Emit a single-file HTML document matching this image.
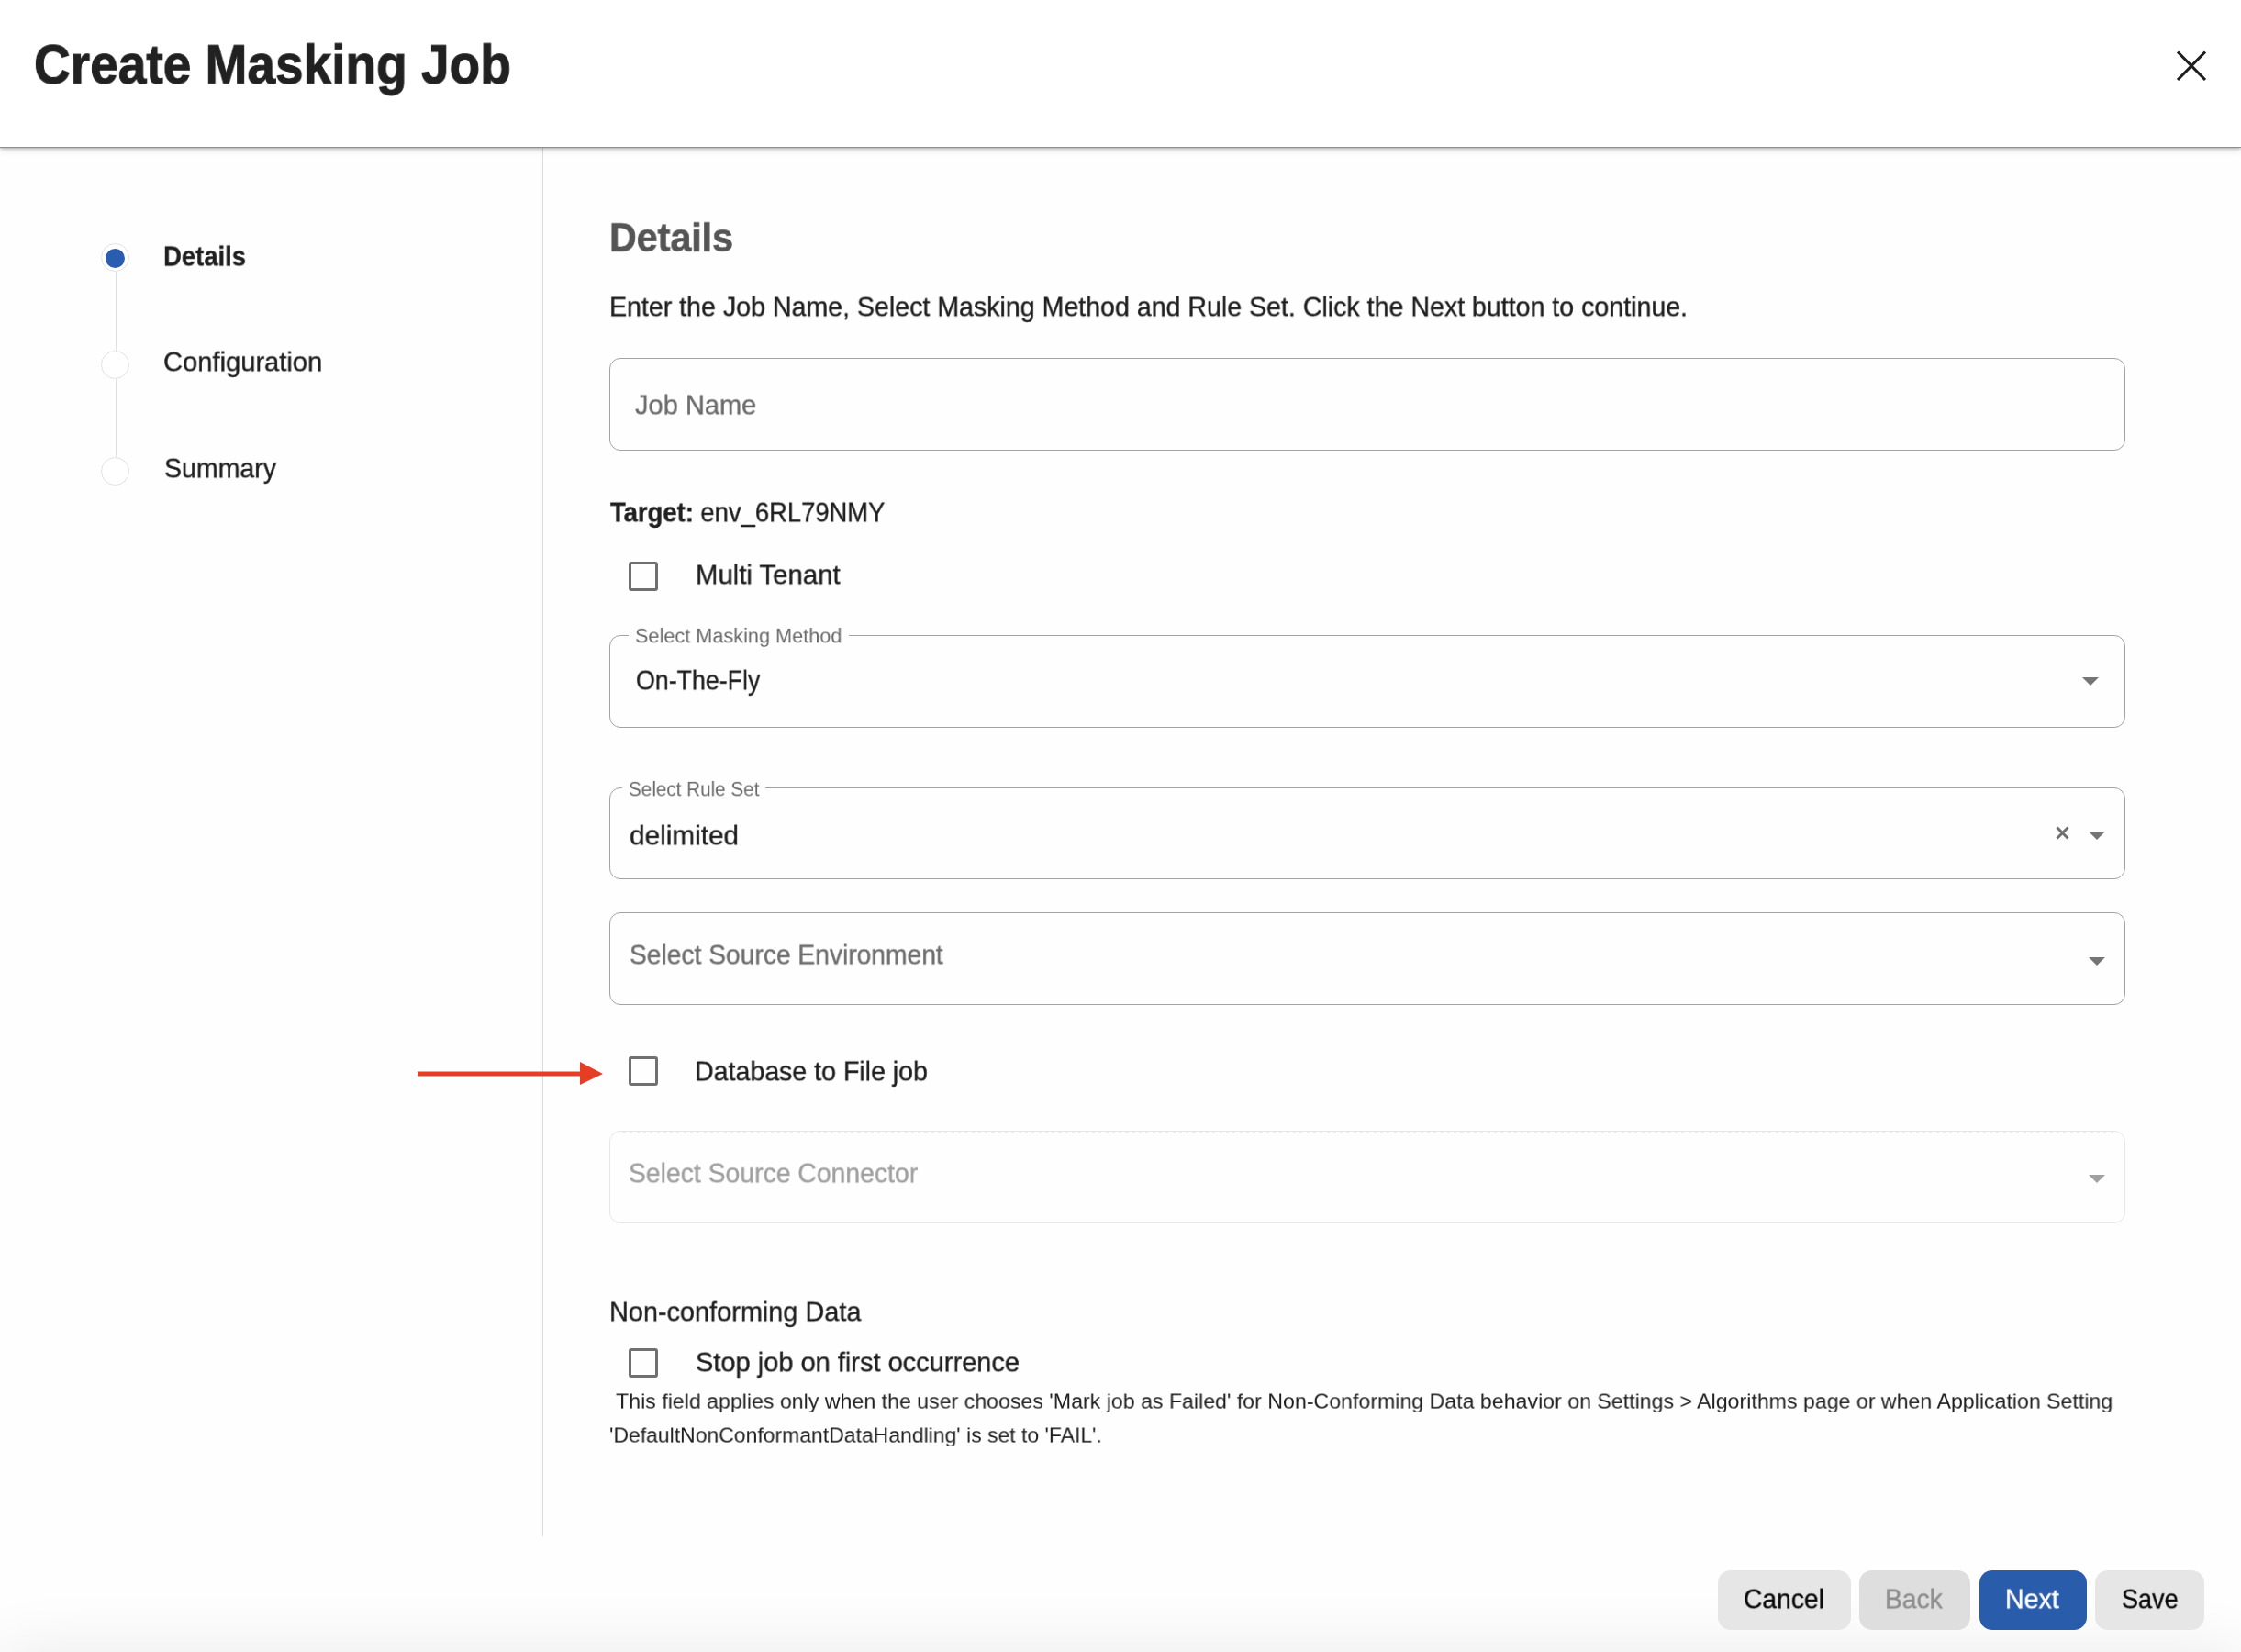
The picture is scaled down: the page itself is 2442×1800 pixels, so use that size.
<!DOCTYPE html>
<html><head><meta charset="utf-8">
<style>
html,body{margin:0;padding:0;}
body{width:2442px;height:1800px;position:relative;overflow:hidden;background:#fefefe;font-family:"Liberation Sans",sans-serif;}
.t{position:absolute;white-space:pre;line-height:0;transform-origin:0 0;z-index:3;will-change:transform;}
.t b{font-weight:700;}
.abs{position:absolute;}
#hdr{left:0;top:0;width:2442px;height:160px;background:#ffffff;box-shadow:0 2px 3px rgba(0,0,0,0.28),0 3px 8px rgba(0,0,0,0.12);z-index:1;}
#hline{left:0;top:160px;width:2442px;height:1px;background:#8f8f8f;z-index:2;}
#divider{left:591px;top:161px;width:1px;height:1513px;background:#dcdcdc;}
.circ{width:29px;height:29px;border:1px solid #e2e2e2;border-radius:50%;background:#fff;}
.dot{width:21px;height:21px;border-radius:50%;background:#2a5db0;}
.vline{width:1px;background:#e0e0e0;}
.box{border:1.4px solid #a3a3a3;border-radius:12px;background:transparent;box-sizing:border-box;}
.cb{width:32px;height:32px;border:3px solid #707070;border-radius:3px;box-sizing:border-box;}
.btn{height:65px;border-radius:14px;top:1711px;}
#foot{left:0;top:1806px;width:2442px;height:200px;background:#f0f0f0;box-shadow:0 0 70px 10px rgba(0,0,0,0.075);border-radius:30px;}
</style></head><body>
<div id="hdr" class="abs"></div><div id="hline" class="abs"></div>
<svg class="abs" style="left:0;top:0;z-index:2" width="2442" height="160">
 <path d="M2373 56.5 L2403 87 M2403 56.5 L2373 87" stroke="#1f1f1f" stroke-width="3.2" fill="none"/>
</svg>
<div id="divider" class="abs"></div>
<!-- stepper -->
<div class="abs vline" style="left:125.5px;top:296px;height:86px;"></div>
<div class="abs vline" style="left:125.5px;top:413px;height:85px;"></div>
<div class="abs circ" style="left:110px;top:265px;"></div>
<div class="abs dot" style="left:115px;top:270.5px;"></div>
<div class="abs circ" style="left:110px;top:382px;"></div>
<div class="abs circ" style="left:110px;top:498px;"></div>
<!-- inputs -->
<div class="abs box" style="left:664px;top:390px;width:1652px;height:101px;"></div>
<div class="abs cb" style="left:684.5px;top:611.5px;"></div>
<div class="abs box" style="left:664px;top:692px;width:1652px;height:101px;"></div>
<div class="abs" style="left:685px;top:689px;width:240px;height:6px;background:#fefefe;"></div>
<svg class="abs" style="left:2269px;top:738px" width="18" height="9"><path d="M0 0 L18 0 L9 9 Z" fill="#757575"/></svg>
<div class="abs box" style="left:664px;top:858px;width:1652px;height:100px;"></div>
<div class="abs" style="left:678px;top:855px;width:156px;height:6px;background:#fefefe;"></div>
<svg class="abs" style="left:2240px;top:900px" width="15" height="15"><path d="M1.5 1.5 L13.5 13.5 M13.5 1.5 L1.5 13.5" stroke="#707070" stroke-width="3" fill="none"/></svg>
<svg class="abs" style="left:2276px;top:906px" width="18" height="9"><path d="M0 0 L18 0 L9 9 Z" fill="#757575"/></svg>
<div class="abs box" style="left:664px;top:994px;width:1652px;height:101px;"></div>
<svg class="abs" style="left:2276px;top:1043px" width="18" height="9"><path d="M0 0 L18 0 L9 9 Z" fill="#757575"/></svg>
<!-- red arrow -->
<svg class="abs" style="left:450px;top:1150px" width="215" height="40">
 <path d="M5 20 L185 20" stroke="#e53e25" stroke-width="5" fill="none"/>
 <path d="M182 7 L207 20 L182 32 Z" fill="#e53e25"/>
</svg>
<div class="abs cb" style="left:684.5px;top:1151px;"></div>
<div class="abs box" style="left:664px;top:1232px;width:1652px;height:101px;border-color:#e6e6e6;"></div>
<div class="abs" style="left:679px;top:1233px;width:1624px;height:2px;background:repeating-linear-gradient(to right,#ededed 0,#ededed 3px,transparent 3px,transparent 7.3px);"></div>
<svg class="abs" style="left:2276px;top:1280px" width="18" height="9"><path d="M0 0 L18 0 L9 9 Z" fill="#a0a0a0"/></svg>
<div class="abs cb" style="left:684.5px;top:1469px;"></div>
<!-- footer -->
<div id="foot" class="abs"></div>
<div class="abs btn" style="left:1872px;width:145px;background:#e6e6e6;"></div>
<div class="abs btn" style="left:2026px;width:121px;background:#dedede;"></div>
<div class="abs btn" style="left:2157px;width:117px;background:#2a5cac;"></div>
<div class="abs btn" style="left:2283px;width:119px;background:#e6e6e6;"></div>
<div class="t" style="left:37.01px;top:69.93px;font-size:60.25px;font-weight:700;color:#212121;transform:scale(0.9132,0.9885);-webkit-text-stroke:1.0px #212121">Create Masking Job</div>
<div class="t" style="left:178.01px;top:278.74px;font-size:30.5px;font-weight:700;color:#1f1f1f;transform:scale(0.9006,0.9496);-webkit-text-stroke:0.35px #1f1f1f">Details</div>
<div class="t" style="left:178.23px;top:394.11px;font-size:30.5px;font-weight:400;color:#1f1f1f;transform:scale(0.9547,0.9430);-webkit-text-stroke:0.4px #1f1f1f">Configuration</div>
<div class="t" style="left:178.55px;top:510.11px;font-size:30.5px;font-weight:400;color:#1f1f1f;transform:scale(0.9351,0.9430);-webkit-text-stroke:0.4px #1f1f1f">Summary</div>
<div class="t" style="left:664.11px;top:259.02px;font-size:44.0px;font-weight:700;color:#555555;transform:scale(0.9360,0.9836);-webkit-text-stroke:0.7px #555555">Details</div>
<div class="t" style="left:663.90px;top:334.11px;font-size:30.5px;font-weight:400;color:#1f1f1f;transform:scale(0.9366,0.9430);-webkit-text-stroke:0.4px #1f1f1f">Enter the Job Name, Select Masking Method and Rule Set. Click the Next button to continue.</div>
<div class="t" style="left:692.40px;top:440.89px;font-size:30.5px;font-weight:400;color:#6b6b6b;transform:scale(0.9511,0.9447);-webkit-text-stroke:0.4px #6b6b6b">Job Name</div>
<div class="t" style="left:665.21px;top:557.65px;font-size:30.5px;font-weight:400;color:#1f1f1f;transform:scale(0.8980,0.9430);-webkit-text-stroke:0.4px #1f1f1f"><b>Target:</b> env_6RL79NMY</div>
<div class="t" style="left:757.85px;top:626.34px;font-size:30.5px;font-weight:400;color:#1f1f1f;transform:scale(0.9614,0.9430);-webkit-text-stroke:0.4px #1f1f1f">Multi Tenant</div>
<div class="t" style="left:691.93px;top:692.56px;font-size:23.0px;font-weight:400;color:#6b6b6b;transform:scale(0.9428,0.9105)">Select Masking Method</div>
<div class="t" style="left:693.10px;top:741.34px;font-size:30.5px;font-weight:400;color:#1f1f1f;transform:scale(0.8775,0.9430);-webkit-text-stroke:0.4px #1f1f1f">On-The-Fly</div>
<div class="t" style="left:684.57px;top:860.02px;font-size:23.0px;font-weight:400;color:#6b6b6b;transform:scale(0.8981,0.9105)">Select Rule Set</div>
<div class="t" style="left:686.00px;top:910.11px;font-size:30.5px;font-weight:400;color:#1f1f1f;transform:scale(0.9755,0.9430);-webkit-text-stroke:0.4px #1f1f1f">delimited</div>
<div class="t" style="left:686.06px;top:1040.11px;font-size:30.5px;font-weight:400;color:#6f6f6f;transform:scale(0.9246,0.9446);-webkit-text-stroke:0.4px #6f6f6f">Select Source Environment</div>
<div class="t" style="left:757.40px;top:1166.96px;font-size:30.5px;font-weight:400;color:#1f1f1f;transform:scale(0.9361,0.9430);-webkit-text-stroke:0.4px #1f1f1f">Database to File job</div>
<div class="t" style="left:685.25px;top:1278.18px;font-size:30.5px;font-weight:400;color:#a0a0a0;transform:scale(0.9294,0.9460);-webkit-text-stroke:0.4px #a0a0a0">Select Source Connector</div>
<div class="t" style="left:664.08px;top:1429.11px;font-size:30.5px;font-weight:400;color:#1f1f1f;transform:scale(0.9465,0.9430);-webkit-text-stroke:0.4px #1f1f1f">Non-conforming Data</div>
<div class="t" style="left:757.78px;top:1484.11px;font-size:30.5px;font-weight:400;color:#1f1f1f;transform:scale(0.9510,0.9430);-webkit-text-stroke:0.4px #1f1f1f">Stop job on first occurrence</div>
<div class="t" style="left:665.35px;top:1527.48px;font-size:23.25px;font-weight:400;color:#1f1f1f;transform:scale(0.9959,0.9500)"> This field applies only when the user chooses 'Mark job as Failed' for Non-Conforming Data behavior on Settings &gt; Algorithms page or when Application Setting</div>
<div class="t" style="left:663.85px;top:1563.79px;font-size:23.25px;font-weight:400;color:#1f1f1f;transform:scale(0.9874,0.9500)">'DefaultNonConformantDataHandling' is set to 'FAIL'.</div>
<div class="t" style="left:1900.37px;top:1742.42px;font-size:30.5px;font-weight:400;color:#0a0a0a;transform:scale(0.9247,0.9430);-webkit-text-stroke:0.4px #0a0a0a">Cancel</div>
<div class="t" style="left:2054.42px;top:1742.43px;font-size:30.5px;font-weight:400;color:#8e8e8e;transform:scale(0.9270,0.9445);-webkit-text-stroke:0.4px #8e8e8e">Back</div>
<div class="t" style="left:2185.15px;top:1742.42px;font-size:30.5px;font-weight:400;color:#ffffff;transform:scale(0.9360,0.9430);-webkit-text-stroke:0.4px #ffffff">Next</div>
<div class="t" style="left:2312.19px;top:1742.42px;font-size:30.5px;font-weight:400;color:#0a0a0a;transform:scale(0.8876,0.9430);-webkit-text-stroke:0.4px #0a0a0a">Save</div>
</body></html>
